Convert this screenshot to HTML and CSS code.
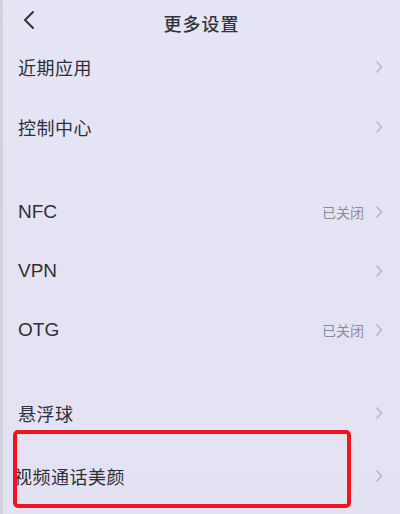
FILE: index.html
```html
<!DOCTYPE html>
<html lang="zh">
<head>
<meta charset="utf-8">
<link rel="stylesheet" href="styles.css">
</head>
<body>
<div class="screen">
  <header class="topbar">
    <svg class="back" width="14" height="20" viewBox="0 0 14 20"><path d="M11 2 L3 10 L11 18" fill="none" stroke="#333" stroke-width="2" stroke-linecap="round" stroke-linejoin="round"/></svg>
    <div class="title">更多设置</div>
  </header>

  <div class="group">
    <div class="row"><span class="label">近期应用</span><span class="right"><svg class="chev" width="8" height="14" viewBox="0 0 8 14"><path d="M1.5 1.5 L6.5 7 L1.5 12.5" fill="none" stroke="#b4b4c2" stroke-width="1.4"/></svg></span></div>
    <div class="row"><span class="label">控制中心</span><span class="right"><svg class="chev" width="8" height="14" viewBox="0 0 8 14"><path d="M1.5 1.5 L6.5 7 L1.5 12.5" fill="none" stroke="#b4b4c2" stroke-width="1.4"/></svg></span></div>
  </div>

  <div class="group g2">
    <div class="row r59"><span class="label latin">NFC</span><span class="right"><span class="status">已关闭</span><svg class="chev" width="8" height="14" viewBox="0 0 8 14"><path d="M1.5 1.5 L6.5 7 L1.5 12.5" fill="none" stroke="#b4b4c2" stroke-width="1.4"/></svg></span></div>
    <div class="row r59"><span class="label latin">VPN</span><span class="right"><svg class="chev" width="8" height="14" viewBox="0 0 8 14"><path d="M1.5 1.5 L6.5 7 L1.5 12.5" fill="none" stroke="#b4b4c2" stroke-width="1.4"/></svg></span></div>
    <div class="row r59"><span class="label latin">OTG</span><span class="right"><span class="status">已关闭</span><svg class="chev" width="8" height="14" viewBox="0 0 8 14"><path d="M1.5 1.5 L6.5 7 L1.5 12.5" fill="none" stroke="#b4b4c2" stroke-width="1.4"/></svg></span></div>
  </div>

  <div class="group g3">
    <div class="row"><span class="label">悬浮球</span><span class="right"><svg class="chev" width="8" height="14" viewBox="0 0 8 14"><path d="M1.5 1.5 L6.5 7 L1.5 12.5" fill="none" stroke="#b4b4c2" stroke-width="1.4"/></svg></span></div>
    <div class="row highlight"><span class="label tight">视频通话美颜</span><span class="right"><svg class="chev" width="8" height="14" viewBox="0 0 8 14"><path d="M1.5 1.5 L6.5 7 L1.5 12.5" fill="none" stroke="#b4b4c2" stroke-width="1.4"/></svg></span><span class="redbox"></span></div>
  </div>
</div>
</body>
</html>
```
FILE: styles.css
```css
* { box-sizing: border-box; }
html, body { margin: 0; padding: 0; }
body {
  width: 400px;
  height: 514px;
  overflow: hidden;
  background: #e4e4f4;
  font-family: "Noto Sans CJK SC", "Noto Sans", sans-serif;
  color: #2f2f38;
}
.screen {
  width: 400px;
  height: 514px;
  display: flex;
  flex-direction: column;
  border-left: 3px solid #d2d2de;
  background: linear-gradient(180deg, #e5e5f5 0%, #e3e3f4 60%, #e2e2f2 100%);
}
.topbar {
  height: 37px;
  flex: none;
  position: relative;
  display: flex;
  align-items: center;
  justify-content: center;
}
.back {
  position: absolute;
  left: 19px;
  top: 10px;
}
.title {
  font-size: 18px;
  font-weight: 500;
  color: #33333c;
  letter-spacing: 1px;
  margin-top: 8px;
}
.group { display: flex; flex-direction: column; flex: none; }
.g2 { margin-top: 25px; }
.g3 { margin-top: 24px; }
.row {
  height: 60px;
  display: flex;
  align-items: center;
  justify-content: space-between;
  padding: 0 17px 0 15px;
  position: relative;
}
.r59 { height: 59px; }
.label {
  font-size: 18px;
  color: #2f2f38;
  letter-spacing: 0.5px;
}
.latin {
  font-family: "Liberation Sans", Arial, sans-serif;
  font-size: 19px;
  letter-spacing: 0;
}
.tight { margin-left: -4px; }
.right {
  display: flex;
  align-items: center;
  gap: 11px;
}
.status {
  font-size: 14px;
  color: #8c8c98;
}
.chev { display: block; }
.highlight { margin-top: 3px; }
.redbox {
  position: absolute;
  left: 10px;
  top: -16px;
  width: 338px;
  height: 78px;
  border: 4px solid #f0141e;
  border-radius: 5px;
}
```
